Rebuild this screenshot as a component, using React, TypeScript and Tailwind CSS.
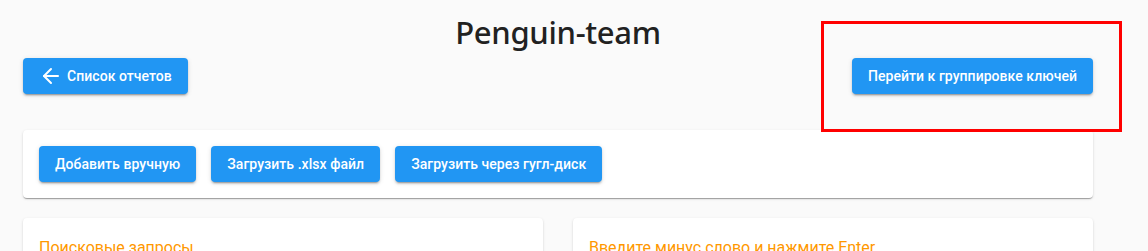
import { ArrowLeft } from "lucide-react";

const btn =
  "flex h-9 items-center rounded bg-[#2196f3] px-4 text-sm font-medium tracking-[0.05px] text-white shadow-[0_3px_1px_-2px_rgba(0,0,0,0.2),0_2px_2px_0_rgba(0,0,0,0.14),0_1px_5px_0_rgba(0,0,0,0.12)]";

const card =
  "rounded bg-white shadow-[0_2px_1px_-1px_rgba(0,0,0,0.2),0_1px_1px_0_rgba(0,0,0,0.14),0_1px_3px_0_rgba(0,0,0,0.12)]";

export default function App() {
  return (
    <div className="relative h-[251px] overflow-hidden bg-[#fafafa] font-['Roboto',sans-serif]">
      <div className="ml-[23px] w-[1070px] pt-[13px]">
        <h1 className="text-center font-['Noto_Sans',sans-serif] text-[31px] font-medium leading-[38px] tracking-[-0.3px] text-[#212121]">
          Penguin-team
        </h1>

        <div className="mt-[7px] flex items-center justify-between">
          <button className={btn}>
            <ArrowLeft size={24} strokeWidth={2} className="mr-1" />
            Список отчетов
          </button>
          <button className={btn}>Перейти к группировке ключей</button>
        </div>

        <div className={`${card} mt-9 flex gap-[15px] p-4`}>
          <button className={btn}>Добавить вручную</button>
          <button className={btn}>Загрузить .xlsx файл</button>
          <button className={btn}>Загрузить через гугл-диск</button>
        </div>

        <div className="mt-5 grid grid-cols-2 gap-[30px]">
          <div className={`${card} h-20 px-4 pt-[18px]`}>
            <p className="text-base leading-6 text-[#ff9800]">Поисковые запросы</p>
          </div>
          <div className={`${card} h-20 px-4 pt-[18px]`}>
            <p className="text-base leading-6 text-[#ff9800]">
              Введите минус слово и нажмите Enter
            </p>
          </div>
        </div>
      </div>

      {/* annotation frame */}
      <div className="pointer-events-none absolute left-[821px] top-[21px] h-[111px] w-[301px] border-[3px] border-[#ff0000]" />
    </div>
  );
}
